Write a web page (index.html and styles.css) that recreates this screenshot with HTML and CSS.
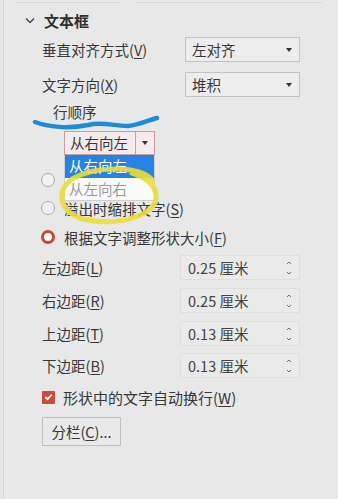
FILE: index.html
```html
<!DOCTYPE html>
<html lang="zh-CN">
<head>
    <meta charset="UTF-8">
    <meta name="viewport" content="width=device-width, initial-scale=1.0">
    <title>文本框</title>
    <link rel="stylesheet" href="styles.css">
</head>
<body>
    <div class="panel">
        <div class="top-bar">
            <span class="top-seg seg-left"></span>
            <span class="top-seg seg-right"></span>
        </div>

        <div class="section-head">
            <svg class="chevron" width="10" height="7" viewBox="0 0 10 7">
                <path d="M1 1.5 L5 5.5 L9 1.5" fill="none" stroke="#444" stroke-width="1.3"/>
            </svg>
            <span>文本框</span>
        </div>

        <div class="row row-select first">
            <label>垂直对齐方式(<u>V</u>)</label>
            <div class="select"><span>左对齐</span><i class="caret"></i></div>
        </div>
        <div class="row row-select second">
            <label>文字方向(<u>X</u>)</label>
            <div class="select"><span>堆积</span><i class="caret"></i></div>
        </div>

        <div class="sub-label">行顺序</div>
        <div class="order-wrap">
            <div class="order-select">
                <span class="order-value">从右向左</span>
                <span class="order-btn"><i class="caret"></i></span>
            </div>
            <ul class="order-list">
                <li class="active">从右向左</li>
                <li>从左向右</li>
            </ul>
        </div>

        <!-- label of the first option is hidden under the open list -->
        <div class="radio-row r1"><span class="radio"></span></div>
        <div class="radio-row r2"><span class="radio"></span>溢出时缩排文字(<u>S</u>)</div>
        <div class="radio-row r3"><span class="radio checked"></span>根据文字调整形状大小(<u>F</u>)</div>

        <div class="row row-spin s1">
            <label>左边距(<u>L</u>)</label>
            <div class="spin"><span>0.25 厘米</span>
                <svg class="arrows" width="6" height="16" viewBox="0 0 6 16"><path d="M1 4 L3 2 L5 4 M1 12 L3 14 L5 12" fill="none" stroke="#707070"/></svg>
            </div>
        </div>
        <div class="row row-spin">
            <label>右边距(<u>R</u>)</label>
            <div class="spin"><span>0.25 厘米</span>
                <svg class="arrows" width="6" height="16" viewBox="0 0 6 16"><path d="M1 4 L3 2 L5 4 M1 12 L3 14 L5 12" fill="none" stroke="#707070"/></svg>
            </div>
        </div>
        <div class="row row-spin">
            <label>上边距(<u>T</u>)</label>
            <div class="spin"><span>0.13 厘米</span>
                <svg class="arrows" width="6" height="16" viewBox="0 0 6 16"><path d="M1 4 L3 2 L5 4 M1 12 L3 14 L5 12" fill="none" stroke="#707070"/></svg>
            </div>
        </div>
        <div class="row row-spin s4">
            <label>下边距(<u>B</u>)</label>
            <div class="spin"><span>0.13 厘米</span>
                <svg class="arrows" width="6" height="16" viewBox="0 0 6 16"><path d="M1 4 L3 2 L5 4 M1 12 L3 14 L5 12" fill="none" stroke="#707070"/></svg>
            </div>
        </div>

        <div class="check-row">
            <span class="checkbox">
                <svg width="9" height="8" viewBox="0 0 9 8">
                    <path d="M1.2 4 L3.5 6.2 L7.8 1.6" fill="none" stroke="#fff" stroke-width="1.8"/>
                </svg>
            </span>
            形状中的文字自动换行(<u>W</u>)
        </div>

        <button class="col-btn">分栏(<u>C</u>)...</button>
    </div>

    <!-- hand-drawn marks on top of the screenshot -->
    <svg class="marks" width="338" height="499" viewBox="0 0 338 499">
        <path d="M35 122 C48 127, 68 129, 88 125 C102 121, 112 126, 128 126 C140 125, 148 120, 157 118"
              fill="none" stroke="#1d8bd6" stroke-width="4.5" stroke-linecap="round"/>
        <path d="M152 180 C142 166, 96 165, 72 179 C56 190, 57 214, 88 220 C118 226, 159 215, 156 195 C155 186, 148 178, 132 173"
              fill="none" stroke="#ebdd34" stroke-width="5" stroke-linecap="round" opacity="0.9"/>
    </svg>
</body>
</html>
```

FILE: styles.css
```css
body {
    margin: 0;
    background-color: #e8e8e8;
    font-family: "Noto Sans CJK SC", "Noto Sans", sans-serif;
    font-size: 14.5px;
    color: #383838;
    position: relative;
    width: 338px;
    height: 499px;
    overflow: hidden;
}

u {
    text-decoration-thickness: 1px;
    text-underline-offset: 2px;
}

.panel {
    margin-left: 3px;
    border-left: 1px solid #d2d5dc;
    height: 499px;
    display: flex;
    flex-direction: column;
    box-sizing: border-box;
}

.top-bar {
    display: flex;
    height: 3px;
    padding-left: 12px;
    gap: 15px;
}

.top-seg {
    border-bottom: 1px solid #d9d9d9;
}

.seg-left {
    width: 104px;
}

.seg-right {
    width: 187px;
}

.section-head {
    display: flex;
    align-items: center;
    height: 24px;
    margin-top: 5px;
    padding-left: 21px;
    font-weight: bold;
    font-size: 15px;
    color: #2e2e2e;
}

.chevron {
    margin-right: 9px;
}

.row {
    display: grid;
    align-items: center;
    padding-left: 38px;
}

.row-select {
    grid-template-columns: 143px 115px;
    height: 25px;
}

.row-select.first {
    margin-top: 5px;
}

.row-select.second {
    margin-top: 10px;
}

.select {
    height: 25px;
    box-sizing: border-box;
    border: 1px solid #c2c2c2;
    background-color: #ededed;
    display: flex;
    align-items: center;
    justify-content: space-between;
    padding: 0 7px 0 6px;
}

.caret {
    width: 0;
    height: 0;
    border-left: 3.5px solid transparent;
    border-right: 3.5px solid transparent;
    border-top: 4px solid #333;
}

.sub-label {
    height: 20px;
    line-height: 20px;
    margin-top: 5px;
    padding-left: 49px;
}

.order-wrap {
    position: relative;
    margin-top: 9px;
    margin-left: 60px;
    width: 91px;
    z-index: 2;
}

.order-select {
    display: flex;
    height: 24px;
    box-sizing: border-box;
    border: 1px solid #cf9c9c;
    background-color: #f4ecec;
}

.order-value {
    width: 71px;
    padding-left: 5px;
    line-height: 22px;
    border-right: 1px solid #cf9c9c;
    box-sizing: border-box;
}

.order-btn {
    flex: 1;
    display: flex;
    align-items: center;
    justify-content: center;
}

.order-list {
    position: absolute;
    top: 24px;
    left: 0;
    width: 91px;
    margin: 0;
    padding: 0;
    list-style: none;
    background-color: #fbfbfb;
    border: 1px solid #cfcfcf;
    border-top: none;
    box-sizing: border-box;
}

.order-list li {
    height: 22px;
    line-height: 22px;
    padding-left: 4px;
    color: #9a9a9a;
}

.order-list li.active {
    height: 23px;
    background-color: #2683e6;
    color: #fff;
}

.radio-row {
    display: flex;
    align-items: center;
    height: 24px;
    padding-left: 37px;
    white-space: nowrap;
}

.radio-row.r1 {
    margin-top: 13px;
}

.radio-row.r2 {
    margin-top: 4px;
}

.radio-row.r3 {
    margin-top: 5px;
}

.radio {
    width: 12px;
    height: 12px;
    border-radius: 50%;
    border: 1px solid #a6a8b4;
    background-color: #f2f2f2;
    margin-right: 9px;
    flex-shrink: 0;
}

.radio.checked {
    width: 8px;
    height: 8px;
    border: 3px solid #c8463a;
    background-color: #fff;
}

.row-spin {
    grid-template-columns: 138px 120px;
    height: 25px;
    margin-top: 8px;
}

.row-spin.s1 {
    margin-top: 6px;
}

.row-spin.s4 {
    margin-top: 7px;
}

.spin {
    height: 25px;
    box-sizing: border-box;
    border: 1px solid #dfdfdf;
    background-color: #eaeaea;
    display: flex;
    align-items: center;
    justify-content: space-between;
    padding: 0 7px 0 7px;
    color: #444;
}

.check-row {
    display: flex;
    align-items: center;
    height: 24px;
    margin-top: 7px;
    padding-left: 38px;
    font-size: 15px;
}

.checkbox {
    width: 13px;
    height: 13px;
    background-color: #cf4a3c;
    border-radius: 1px;
    margin-right: 8px;
    display: flex;
    align-items: center;
    justify-content: center;
}

.col-btn {
    align-self: flex-start;
    margin-top: 8px;
    margin-left: 38px;
    width: 79px;
    height: 29px;
    border: 1px solid #c0c0c0;
    background-color: #e9e9e9;
    font-family: inherit;
    font-size: 14.5px;
    color: #383838;
    padding: 0;
}

.marks {
    position: absolute;
    top: 0;
    left: 0;
    pointer-events: none;
    z-index: 5;
}
```
